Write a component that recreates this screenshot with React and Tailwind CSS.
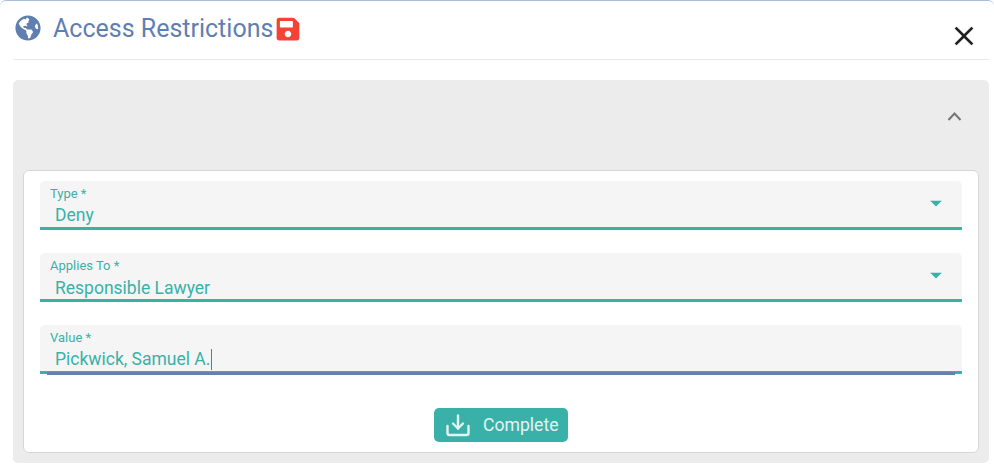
import React from "react";
import { FaGlobeAmericas, FaSave } from "react-icons/fa";
import { MdClose, MdArrowDropDown } from "react-icons/md";

function Field({ label, value, select, focused, offset }) {
  return (
    <div className="relative h-[49px] rounded-t-[5px] bg-[#f5f5f5] border-b-[3px] border-[#3ab1a8] pl-[10px] text-[#3ab1a8]">
      <div className="pt-[5px] text-[13px] leading-[15px]">{label}</div>
      <div className={offset ? "pl-[5px] pt-[3px] text-[17.5px] leading-[24px] flex items-center" : "pl-[5px] pt-[2px] text-[17.5px] leading-[24px] flex items-center"}>
        <span>{value}</span>
        {focused && <span className="ml-[1px] w-px h-[21px] bg-[#4f79bd]" />}
      </div>
      {select && <MdArrowDropDown className="absolute right-[12px] top-[8px] text-[28px]" />}
      {focused && <div className="absolute left-[7px] right-[7px] bottom-[-4px] h-[3px] bg-[#6482b1]" />}
    </div>
  );
}

export default function App() {
  return (
    <div className="w-[994px] h-[473px] overflow-hidden bg-white font-['Roboto',sans-serif] border-t border-[#a9bdd9] rounded-tl-[6px] rounded-tr-[6px] px-[13px] pr-[5px]">
      <div className="h-[59px] border-b border-[#e9e9e9] relative flex items-start">
        <FaGlobeAmericas className="mt-[14px] ml-[2px] text-[26px] text-[#5f7fb1]" />
        <div className="ml-[12px] mt-[12px] text-[25px] leading-[32px] text-[#5f7fb1]">Access Restrictions</div>
        <FaSave className="mt-[15px] ml-[2px] text-[26px] text-[#f44336]" />
        <MdClose className="absolute right-[9px] top-[19px] text-[32px] text-[#212121]" />
      </div>
      <div className="mt-[20px] h-[383px] rounded-[5px] bg-[#ececec] px-[10px] pb-[10px] flex flex-col">
        <div className="h-[90px] flex justify-end items-start pr-[17px] pt-[31px]">
          <svg width="15" height="10" viewBox="0 0 15 10" fill="none" stroke="#757575" strokeWidth="2">
            <path d="M1.5 9l6-6.5 6 6.5" />
          </svg>
        </div>
        <div className="flex-1 bg-white rounded-[6px] border border-[#d6d6d6] pt-[10px] px-[16px] flex flex-col gap-[23px]">
          <Field label="Type *" value="Deny" select />
          <Field label="Applies To *" value="Responsible Lawyer" select offset />
          <Field label="Value *" value="Pickwick, Samuel A." focused />
          <div className="flex justify-center mt-[11px]">
            <button className="w-[134px] h-[34px] rounded-[5px] bg-[#3ab1a8] text-[17.6px] flex items-center pl-[12px]">
              <svg width="24" height="24" viewBox="0 0 24 24" fill="none" stroke="#e2f4f2" strokeWidth="2.4" strokeLinecap="round" strokeLinejoin="round">
                <path d="M12 2.5v13" />
                <path d="M7 10.5l5 5 5-5" />
                <path d="M1.5 13v7a2 2 0 0 0 2 2h17a2 2 0 0 0 2-2v-7" />
              </svg>
              <span className="ml-[13px] text-[#e2f4f2]">Complete</span>
            </button>
          </div>
        </div>
      </div>
    </div>
  );
}
